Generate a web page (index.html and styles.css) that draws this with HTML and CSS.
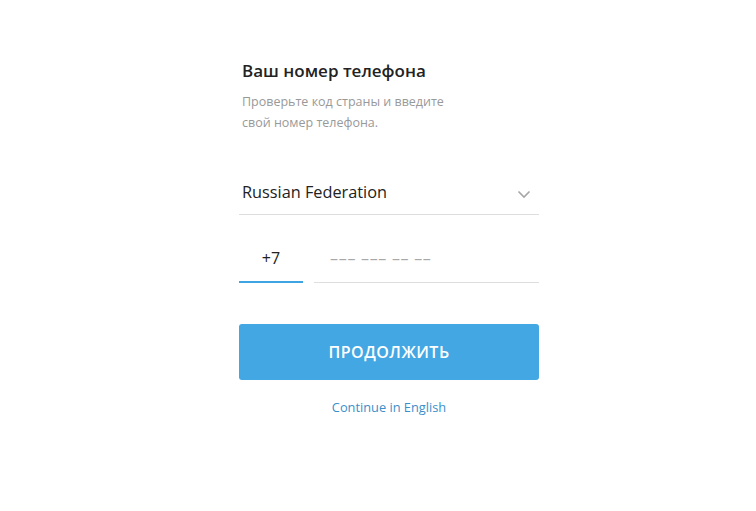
FILE: index.html
```html
<!DOCTYPE html>
<html lang="ru">
<head>
    <meta charset="UTF-8">
    <title>Telegram</title>
    <link rel="stylesheet" href="styles.css">
</head>
<body>

<div class="page">
    <div class="login">
        <h3 class="login-title">Ваш номер телефона</h3>
        <p class="login-hint">Проверьте код страны и введите<br>свой номер телефона.</p>

        <div class="country">
            <span class="country-name">Russian Federation</span>
            <svg class="chevron" width="14" height="9" viewBox="0 0 14 9">
                <path d="M1.5 1.5 L7 7 L12.5 1.5" fill="none" stroke="#a6a6a6" stroke-width="1.6"/>
            </svg>
        </div>

        <div class="phone">
            <div class="phone-code">+7</div>
            <div class="phone-number">––– ––– –– ––</div>
        </div>

        <button class="btn-next">ПРОДОЛЖИТЬ</button>

        <a class="lang-link" href="#">Continue in English</a>
    </div>
</div>

</body>
</html>
```

FILE: styles.css
```css
body {
    margin: 0;
    background: #fff;
    font-family: "Open Sans", "Liberation Sans", sans-serif;
    color: #222;
}
.page {
    display: flex;
    justify-content: center;
    padding-left: 22px;
    padding-top: 57px;
}
.login {
    width: 300px;
    display: flex;
    flex-direction: column;
}
.login-title {
    margin: 0;
    padding-left: 3px;
    font-size: 17px;
    font-weight: 600;
    line-height: 28px;
    color: #222;
}
.login-hint {
    margin: 6px 0 0;
    padding-left: 3px;
    font-size: 12.5px;
    line-height: 21px;
    color: #999;
}
.country {
    margin-top: 35px;
    height: 46px;
    border-bottom: 1px solid #dedede;
    display: flex;
    align-items: center;
    justify-content: space-between;
    padding: 0 8px 0 3px;
}
.country-name {
    margin-top: 2px;
    font-size: 16.3px;
    color: #222;
}
.chevron { margin-top: 6px; }
.phone {
    margin-top: 21px;
    display: flex;
    gap: 11px;
}
.phone-code {
    width: 64px;
    height: 45px;
    border-bottom: 2px solid #3ea5e2;
    text-align: center;
    font-size: 16px;
    line-height: 44px;
    color: #222;
}
.phone-number {
    flex: 1;
    height: 46px;
    border-bottom: 1px solid #dedede;
    padding-left: 16px;
    font-size: 16px;
    line-height: 44px;
    letter-spacing: 0.7px;
    color: #a8a8a8;
}
.btn-next {
    margin-top: 41px;
    height: 56px;
    border: none;
    border-radius: 3px;
    background: #42a7e2;
    color: #fff;
    font-family: inherit;
    font-size: 16px;
    font-weight: 600;
    letter-spacing: 0.5px;
    cursor: pointer;
}
.lang-link {
    margin-top: 18px;
    align-self: center;
    font-size: 12.8px;
    line-height: 18px;
    color: #3a8fca;
    text-decoration: none;
}
```
